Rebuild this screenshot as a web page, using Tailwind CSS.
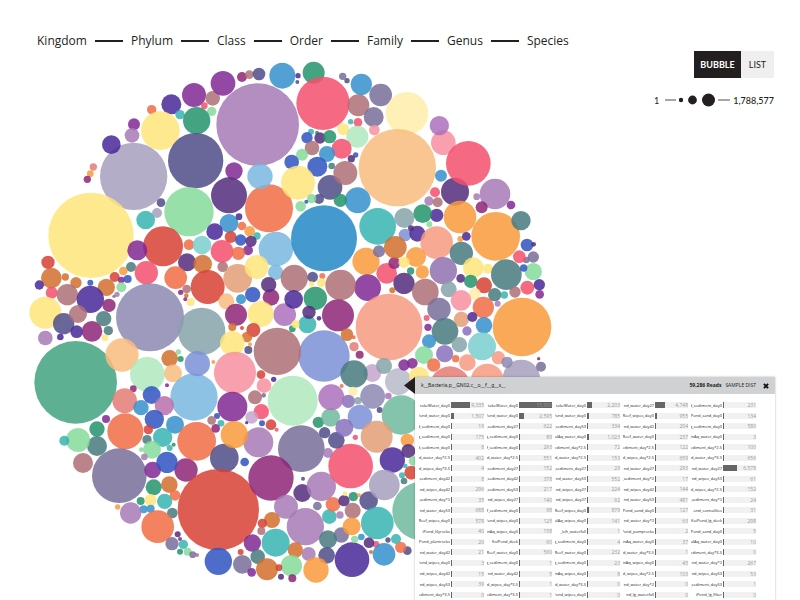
<!DOCTYPE html>
<html lang="en">
<head>
<meta charset="utf-8">
<title>Taxonomy bubbles</title>
<script src="https://cdn.jsdelivr.net/npm/@tailwindcss/browser@4"></script>
</head>
<body class="bg-white">
<div class="relative flex h-screen items-start justify-between overflow-hidden font-['Open_Sans',sans-serif] text-[#231f20]">
  <main class="min-w-0 pt-8">
    <nav aria-label="Rank" class="flex items-center gap-2 pl-[37px] text-[12px] leading-[18px]">
      <a href="#kingdom">Kingdom</a>
      <span class="h-0.5 w-7 bg-[#231f20]"></span>
      <a href="#phylum">Phylum</a>
      <span class="h-0.5 w-7 bg-[#231f20]"></span>
      <a href="#class">Class</a>
      <span class="h-0.5 w-7 bg-[#231f20]"></span>
      <a href="#order">Order</a>
      <span class="h-0.5 w-7 bg-[#231f20]"></span>
      <a href="#family">Family</a>
      <span class="h-0.5 w-7 bg-[#231f20]"></span>
      <a href="#genus">Genus</a>
      <span class="h-0.5 w-7 bg-[#231f20]"></span>
      <a href="#species">Species</a>
    </nav>
    <svg id="bubbles" class="block w-[580px] opacity-95" viewBox="0 150 1740 1620" role="img" aria-label="Bubbles by read count"></svg>
  </main>

  <aside class="flex shrink-0 flex-col items-end gap-[15px] pt-[51px] pr-[26px] font-['Lato',sans-serif]">
    <div class="flex h-[27px] text-[9px]">
      <button class="w-[47px] bg-[#231f20] font-bold text-white">BUBBLE</button>
      <button class="w-[33px] bg-[#efefef]">LIST</button>
    </div>
    <div class="flex items-center text-[9px] leading-[13px]">
      <span>1</span>
      <svg class="mr-0.5 ml-1 h-[14px] w-[68px]" viewBox="0 0 68 14" fill="#231f20" aria-hidden="true">
        <path d="M2 7h11M55 7h12" stroke="#231f20" stroke-width=".8"/>
        <circle cx="18" cy="7" r="2.2"/><circle cx="29.5" cy="7" r="4.4"/><circle cx="45.5" cy="7" r="6.5"/>
      </svg>
      <span class="font-medium">1,788,577</span>
    </div>
  </aside>

  <section class="absolute top-[377px] right-[25px] left-[415px] bg-white shadow-[0_0_2px_rgba(0,0,0,0.3)]">
    <svg class="absolute top-0 -left-[11px] h-[17px] w-[11px]" viewBox="0 0 11 17" aria-hidden="true"><path d="M11 0v17L0 8.500z" fill="#231f20"/></svg>
    <header class="flex h-[17px] items-center bg-[#cfd1d2] pr-[6px] pl-[6px] text-[5px]">
      <h2 class="flex-1 font-['Noto_Sans',sans-serif]">k__Bacteria,p__GN02,c__o__f__g__s__</h2>
      <b>59,286 Reads</b>
      <a href="#dist" class="ml-1">SAMPLE DIST</a>
      <button aria-label="Close" class="ml-[7px]"><svg class="h-[6px] w-[6px]" viewBox="0 0 6 6"><path d="M.9.9l4.200 4.200M5.100.9L.9 5.100" stroke="#111" stroke-width="1.900"/></svg></button>
    </header>
    <div class="pt-[6px] pr-[19px] pl-px">
      <table class="h-[200px] w-full table-fixed border-collapse"><tbody id="rows"></tbody></table>
    </div>
  </section>
</div>

<template id="cell">
  <td class="p-0 align-middle">
    <div class="flex h-[7px] items-center">
      <span data-label class="ml-[3px] flex w-[31px] shrink-0 justify-end overflow-hidden text-[4px] leading-[7px] whitespace-nowrap text-[#222222]"></span>
      <span class="relative ml-px flex h-[6px] flex-1 items-center justify-end bg-[#f1f1f1]">
        <span data-bar class="absolute inset-y-0 left-0 min-w-px bg-[#666666]"></span>
        <span data-value class="relative text-[5px] leading-[6px] text-[#999999]"></span>
      </span>
    </div>
  </td>
</template>

<script>
// Tones as they appear on a white ground.
const tones = {
  a:'#b088bd', p:'#8e3fa0', v:'#5d3fa3', V:'#65428c', n:'#625f96', s:'#867da5', L:'#afa9c5', l:'#9896ba',
  b:'#4a9dd2', B:'#3a95cd', k:'#88bfe3', K:'#8a9ddb', r:'#4666c8', t:'#4bbcb9', c:'#88d3d3', g:'#3a9f7a',
  G:'#55ad8d', m:'#93dfa5', M:'#b8eac5', q:'#7ec0a8', y:'#ffe888', Y:'#fff0b4', o:'#f9a550', O:'#f9c48c',
  d:'#d87e43', e:'#f27c58', R:'#dc5549', h:'#f6637c', H:'#f99bab', S:'#f7a58f', E:'#e88a84', w:'#e6a883',
  u:'#b67f85', j:'#9a3c86', x:'#b57fc3', z:'#5a898d', Z:'#93adb3', A:'#9b80b8', P:'#9580c5', i:'#bfc2cf',
  T:'#cbaed4', X:'#c07fb5'
};
// Clusters: origin, then "tone x y radius" for each bubble.
const clusters = [
 [60,60,`L 341 469 101,v 274 374 28,p 342 313 18,a 336 346 22,E 220 441 11,o 211 461 10,j 202 478 11,e 395 269 14,v 454 253 30,t 480 284 14,p 522 225 36,u 578 235 22,h 553 257 10,m 575 274 14,g 530 302 41,y 421 332 58,n 527 422 83,p 609 190 37,j 666 171 15,u 688 164 13,n 717 162 19,b 787 167 39,a 713 314 124,p 642 453 26,V 627 526 54,e 747 565 72,k 720 469 38,m 507 575 74,t 377 600 28,n 423 548 13,L 411 579 15`],
 [870,60,`v 24 167 8,n 22 186 6,g 71 158 33,h 99 250 80,s 158 169 11,n 171 182 8,b 214 193 32,u 205 256 33,s 272 225 34,s 251 291 30,h 204 307 13,t 182 305 8,H 253 330 16,Y 351 280 64,O 322 443 116,H 460 368 37,x 448 317 29,V 495 515 42,h 535 430 67,b 453 467 18,a 615 522 46,a 560 530 10,p 663 555 13,j 575 562 18,h 435 517 15,a 417 543 14,u 443 547 15,y 160 328 18,M 202 350 33,t 63 335 9,g 81 338 6,r 51 353 17,V 90 354 17,g 119 350 20,u 66 384 22,h 155 386 30,m 36 404 18,b 111 402 24,r 197 405 8,V 184 416 11,r 5 426 22,r 82 440 30,z 125 438 10,y 24 488 51,n 120 502 37,u 166 459 36,b 203 541 39,g 151 541 20,n 87 537 15,m 65 536 14,m 32 559 16,r 49 545 6`],
 [60,600,`y 213 106 128,R 429 139 60,p 352 151 30,z 333 201 15,h 379 218 35,o 310 213 13,R 284 231 15,p 304 240 10,r 323 237 12,d 259 262 26,m 304 262 15,a 291 283 8,s 282 289 5,r 211 248 9,d 168 248 17,d 136 231 11,R 84 187 20,d 94 234 31,v 58 255 14,h 95 278 18,u 142 284 32,v 211 298 41,j 267 316 20,y 76 338 48,n 131 371 32,u 174 342 27,v 170 395 19,j 216 394 31,z 251 356 23,z 265 392 14,y 255 413 10,a 76 414 22,v 121 411 10,G 167 547 124,l 390 352 102,O 306 465 50,e 507 134 16,c 546 135 28,V 501 187 27,d 548 192 28,e 467 233 34,u 500 267 13,j 482 277 8,d 499 287 7,p 496 298 6,y 512 306 12,R 563 261 51,Z 545 394 71,M 382 523 52,d 449 475 25,O 459 520 27,m 475 456 8,g 482 477 9,k 522 591 71,K 532 491 38,o 580 486 6,j 340 566 10,p 441 556 6,E 314 602 37,r 395 585 27`],
 [600,600,`b 87 70 28,v 117 50 10,v 44 95 25,e 126 78 13,o 149 94 16,t 171 108 11,R 92 111 18,r 122 120 17,V 153 124 17,p 144 151 15,h 66 154 34,e 115 160 20,u 68 200 16,k 228 147 52,B 372 115 99,t 533 79 55,o 498 184 41,s 537 154 18,w 113 235 43,y 170 201 36,k 227 217 23,u 283 235 41,n 338 231 16,e 367 228 9,y 335 252 8,y 364 248 13,p 503 263 40,u 422 255 46,h 560 220 31,j 583 189 18,j 213 292 25,V 206 254 23,r 158 284 23,b 123 298 15,O 79 304 24,x 254 344 34,v 281 298 28,g 346 295 35,j 108 344 33,y 182 342 39,t 322 373 27,V 327 337 20,v 357 355 7,j 414 346 48,g 277 386 10,y 287 373 12,d 97 381 12,R 126 384 6,R 160 390 21,d 141 411 16,o 150 433 6,n 145 450 12,y 97 430 37,K 372 468 77,u 232 454 71,H 105 518 63,R 183 524 13,v 221 538 8,H 192 557 22,M 278 602 75,S 567 381 100,d 441 404 19,e 461 412 6,E 462 440 14,j 479 464 12,T 517 519 27,z 462 522 41,i 595 545 40,Z 552 498 24,d 577 271 9,e 425 558 6,Y 459 574 14`],
 [1140,570,`Z 73 84 30,v 170 76 20,g 128 71 28,m 148 103 9,o 240 81 49,o 347 139 73,z 423 92 29,K 75 135 19,v 112 131 24,V 93 115 9,d 46 172 34,S 170 158 49,z 244 190 35,o 241 147 9,v 259 139 13,o 108 201 30,y 72 217 17,g 92 243 11,o 127 246 20,V 72 280 32,A 190 242 41,u 136 306 40,Z 206 298 24,y 280 233 31,y 324 236 15,V 242 265 13,g 272 274 20,z 379 254 46,R 312 286 24,Y 284 311 18,z 344 314 20,t 373 315 11,u 405 306 17,h 442 293 21,v 478 284 17,p 479 313 13,m 460 245 26,r 431 234 11,s 439 210 10,s 460 201 17,h 418 200 19,r 441 165 19,V 461 163 7,H 243 331 31,e 310 352 32,a 353 341 9,s 177 358 35,w 244 388 23,v 277 381 15,b 312 406 25,P 261 423 14,z 195 424 40,h 140 384 9,p 144 412 11,b 147 454 21,Z 238 464 23,P 194 491 26,m 132 495 27,p 72 525 17,p 97 520 16,e 161 525 20,e 227 506 11,S 262 518 25,S 355 503 20,c 306 469 42,L 424 565 56,l 381 517 17,s 483 530 15,j 476 506 5,o 426 411 88,y 117 560 30,E 210 590 61,S 322 570 49`],
 [60,1140,`b 363 83 23,X 433 77 29,r 403 118 29,e 316 154 54,R 385 149 14,b 465 134 27,z 381 179 14,t 428 172 29,g 461 194 6,t 449 204 9,m 396 209 27,m 364 209 7,a 373 231 10,p 258 117 12,g 231 147 23,z 231 198 30,m 174 180 36,t 133 182 15,u 189 249 30,s 298 287 82,p 398 270 25,j 498 270 35,r 441 247 32,d 448 314 25,g 401 322 24,e 465 346 16,g 362 363 12,y 392 360 18,t 434 364 23,b 371 388 12,b 392 386 12,z 457 399 16,a 332 399 32,o 293 381 8,e 413 440 49,V 473 463 9,j 480 477 6,s 456 491 20,t 490 493 14,g 480 515 9,m 503 515 12,s 518 524 10,u 531 525 6,e 530 184 58`],
 [600,1140,`n 73 234 43,R 55 389 122,r 55 544 41,u 165 52 21,s 191 46 7,h 184 95 23,p 97 80 45,T 155 112 19,r 186 130 9,R 213 134 16,h 230 149 6,V 140 128 5,r 51 108 9,u 35 121 13,t 63 130 10,j 47 145 13,a 175 187 45,o 103 164 41,s 304 206 70,r 134 246 13,j 213 294 68,n 309 296 6,V 307 339 27,a 364 319 44,a 258 380 36,a 316 440 56,s 352 378 13,t 388 410 22,e 399 373 22,V 432 362 17,a 420 405 11,y 435 341 7,g 460 350 14,o 477 346 6,n 506 362 28,u 458 392 24,s 424 465 23,o 455 439 27,t 532 429 49,z 384 478 27,n 380 526 25,a 326 522 21,d 286 510 23,t 227 488 42,p 157 489 26,d 216 420 24,R 187 430 14,u 184 453 12,s 127 553 28,z 173 530 22,R 122 516 9,p 155 577 13,d 201 568 33,m 274 557 32,R 237 563 10,V 243 590 9,j 277 595 12,o 348 570 38,v 456 539 52,m 464 478 11,b 484 471 10,h 528 493 10,V 507 488 16,d 513 516 6,b 552 523 34,n 564 480 8,t 588 477 15,n 622 512 13,e 602 502 17,h 452 258 67,a 384 219 15,h 466 172 8,n 409 181 25,n 374 158 17,g 355 127 17,q 392 112 28,K 480 111 37,P 433 143 27,P 445 64 20,Z 474 62 11,x 394 52 39,l 518 49 37,x 565 48 10,n 539 90 9,q 604 105 59,w 530 170 48,v 577 240 38,o 622 181 20,V 625 213 21,m 640 243 14,R 634 278 21,t 616 258 7,t 606 286 9,z 612 303 10,L 553 315 46,q 665 393 88`]
];
const alpha = 0.85;
const ink = hex => 'rgba(' + [1, 3, 5].map(i =>
  Math.max(0, Math.round((parseInt(hex.slice(i, i + 2), 16) - 255 * (1 - alpha)) / alpha))).join(',') + ',' + alpha + ')';
const svg = document.getElementById('bubbles');
for (const [ox, oy, list] of clusters) {
  for (const item of list.split(',')) {
    const [tone, x, y, r] = item.split(' ');
    const c = document.createElementNS('http://www.w3.org/2000/svg', 'circle');
    c.setAttribute('cx', ox + +x);
    c.setAttribute('cy', oy + +y);
    c.setAttribute('r', r);
    c.setAttribute('fill', ink(tones[tone]));
    svg.append(c);
  }
}

const samples = `takeWater_day0 9,335|takeWater_day0 15,900|takeWater_day0 2,203|nd_water_day27 4,748|d_sediment_day0 231
Pond_water_day0 1,507|Pond_water_day0 2,595|Pond_water_day0 785|Reef_wipes_day0 955|Pond_sand_day0 134
d_sediment_day0 19|_sediment_day27 622|_sediment_day53 334|nd_water_day42 204|q_sediment_day0 580
q_sediment_day0 175|q_sediment_day0 89|alAq_water_day0 1,023|Reef_water_day0 237|inAq_water_day0 3
d_sediment_day0 8|f_sediment_day0 293|ediment_day*2.5 72|ediment_day*2.5 122|ediment_day*2.5 100
d_water_day*2.5 402|d_water_day*2.5 551|d_water_day*2.5 153|d_wipes_day*2.5 659|d_water_day*3.5 656
d_wipes_day*3.5 4|_sediment_day27 152|_sediment_day27 29|nd_water_day27 293|nd_water_day27 6,578
_sediment_day42 8|_sediment_day42 378|nd_water_day53 552|_sediment_day*2 17|nd_wipes_day53 61
nd_wipes_day42 296|_sediment_day53 217|nd_wipes_day27 224|nd_wipes_day42 144|d_wipes_day*2.5 152
_sediment_day*2 35|nd_wipes_day27 140|nd_wipes_day27 62|nd_water_day53 481|_sediment_day*2 24
nd_water_day53 688|f_sediment_day0 98|Reef_wipes_day0 879|Pond_sand_day0 127|ond_cannalilies 31
Reef_wipes_day0 578|Pond_wipes_day0 125|alAq_wipes_day0 141|nd_water_day*2 63|KoiPond_lg_deck 298
iPond_lilyrocks 40|inAq_wipes_day0 158|_left_waterfall 1|Pond_pumprocks 2|Pond_sand_day0 5
Pond_plantrocks 20|KoiPond_deck 60|q_sediment_day0 4|inAq_water_day0 37|alAq_water_day0 10
nd_water_day42 21|Reef_water_day0 560|Reef_water_day0 232|d_water_day*3.5 1|ediment_day*3.5 0
Pond_wipes_day0 3|q_sediment_day0 1|q_sediment_day0 23|inAq_wipes_day0 45|nd_water_day*2 267
nd_wipes_day42 15|nd_water_day42 5|inAq_wipes_day0 8|d_wipes_day*2.5 103|nd_wipes_day53 53
nd_wipes_day53 39|d_wipes_day*3.5 1|d_water_day*3.5 0|nd_water_day*2 0|_sediment_day53 1
ediment_day*3.5 0|ediment_day*3.5 1|Pond_wipes_day0 0|nd_lg_waterfall 0|iPond_lg_filter 0`;
const cell = document.getElementById('cell');
for (const line of samples.split('\n')) {
  const tr = document.createElement('tr');
  for (const entry of line.split('|')) {
    const [label, value] = entry.split(' ');
    const td = cell.content.cloneNode(true);
    td.querySelector('[data-label]').textContent = label;
    td.querySelector('[data-value]').textContent = value;
    td.querySelector('[data-bar]').style.width = value.replace(',', '') / 159 + '%';
    tr.append(td);
  }
  document.getElementById('rows').append(tr);
}
</script>
</body>
</html>
